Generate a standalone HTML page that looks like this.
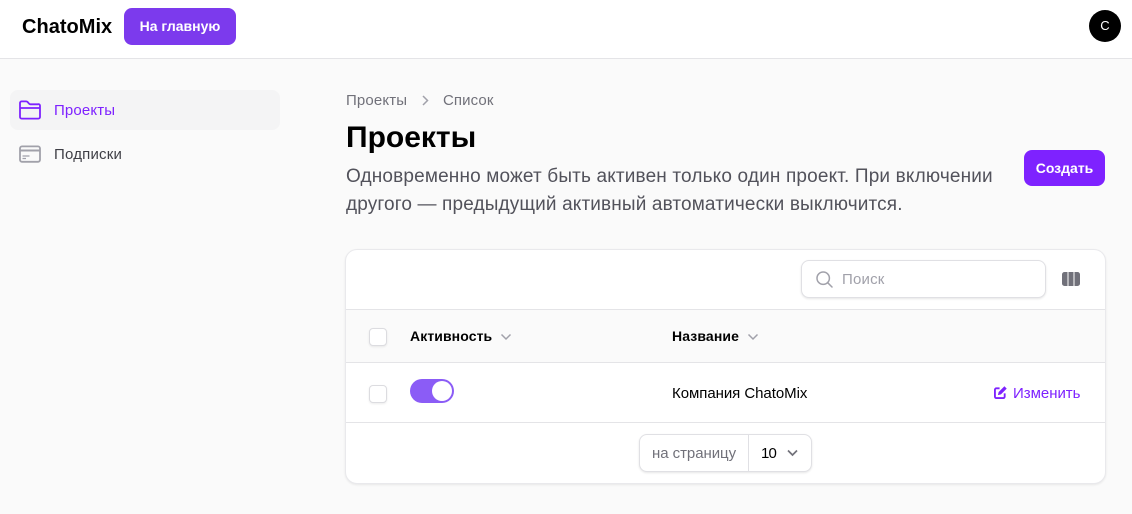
<!DOCTYPE html>
<html><head><meta charset="utf-8">
<style>
*{box-sizing:border-box}
html,body{margin:0;padding:0}
body{width:1132px;height:514px;overflow:hidden;background:#fafafa;position:relative;font-family:"Liberation Sans",sans-serif;color:#000}
.a{position:absolute;white-space:nowrap}
</style></head><body>
<div class="a" style="left:0;top:0;width:1132px;height:59px;background:#fff;border-bottom:1px solid #e4e4e7"></div>
<div class="a" style="left:22px;top:15px;font-size:20px;line-height:24px;font-weight:700;letter-spacing:.02px">ChatoMix</div>
<div class="a" style="left:124px;top:8px;width:112px;height:37px;background:#7c3aed;border-radius:8px;color:#fff;font-size:14px;font-weight:700;line-height:37px;text-align:center">На главную</div>
<div class="a" style="left:1089px;top:10px;width:32px;height:32px;border-radius:50%;background:#000;color:#fff;font-size:13px;line-height:32px;text-align:center">C</div>

<div class="a" style="left:10px;top:90px;width:270px;height:40px;background:#f4f4f5;border-radius:8px"></div>
<svg class="a" style="left:19px;top:100px" width="22" height="20" viewBox="0 0 22 20" fill="none" stroke="#7e22ff" stroke-width="1.800" stroke-linejoin="round"><path d="M1 5V3a1.600 1.600 0 0 1 1.600-1.600h4.600c.6 0 1 .2 1.400.6l1.600 1.800c.3.3.7.500 1.200.500h7.400A1.600 1.600 0 0 1 21 6v11a1.600 1.600 0 0 1-1.600 1.600H2.600A1.600 1.600 0 0 1 1 17V5Z"/><path d="M1 8h20"/></svg>
<div class="a" style="left:54px;top:102px;font-size:15px;line-height:18px;color:#7e22ff;letter-spacing:.15px">Проекты</div>
<svg class="a" style="left:19px;top:145px" width="22" height="18" viewBox="0 0 22 18" fill="none" stroke="#a1a1aa" stroke-width="1.800"><rect x="1" y="1.400" width="20" height="15.400" rx="2"/><path d="M1 5.500h20" stroke-width="2"/><path d="M3.500 11h7M3.500 13.500h3.500" stroke-width="1.200"/></svg>
<div class="a" style="left:54px;top:146px;font-size:15px;line-height:18px;color:#3f3f46;letter-spacing:.2px">Подписки</div>

<div class="a" style="left:346px;top:92px;font-size:15px;line-height:18px;color:#71717a;letter-spacing:.15px">Проекты</div>
<svg class="a" style="left:420px;top:94px" width="11" height="13" viewBox="0 0 11 13" fill="none" stroke="#a1a1aa" stroke-width="1.500"><path d="M3 2l4.500 4.500L3 11"/></svg>
<div class="a" style="left:443px;top:92px;font-size:15px;line-height:18px;color:#71717a;letter-spacing:.1px">Список</div>
<div class="a" style="left:346px;top:120px;font-size:30px;line-height:36px;font-weight:700;letter-spacing:0">Проекты</div>
<div class="a" style="left:346px;top:163px;font-size:19px;line-height:28px;color:#52525b;letter-spacing:.16px">Одновременно может быть активен только один проект. При включении</div>
<div class="a" style="left:346px;top:191px;font-size:19px;line-height:28px;color:#52525b;letter-spacing:.14px">другого — предыдущий активный автоматически выключится.</div>
<div class="a" style="left:1024px;top:150px;width:81px;height:36px;background:#7e22ff;border-radius:8px;color:#fff;font-size:14px;font-weight:700;line-height:36px;text-align:center">Создать</div>

<div class="a" style="left:345px;top:249px;width:761px;height:235px;background:#fff;border:1px solid #e9e9ec;border-radius:12px;box-shadow:0 1px 2px rgba(0,0,0,.08)"></div>
<div class="a" style="left:801px;top:260px;width:245px;height:38px;background:#fff;border:1px solid #e0e0e4;border-radius:8px;box-shadow:0 1px 2px rgba(0,0,0,.1)"></div>
<svg class="a" style="left:816px;top:271px" width="17" height="17" viewBox="0 0 17 17" fill="none" stroke="#a1a1aa" stroke-width="1.500" stroke-linecap="round"><circle cx="7.200" cy="7.200" r="6.200"/><path d="M11.800 11.800L16 16"/></svg>
<div class="a" style="left:842px;top:271px;font-size:15px;line-height:18px;color:#a1a1aa;letter-spacing:.2px">Поиск</div>
<svg class="a" style="left:1062px;top:272px" width="18" height="14" viewBox="0 0 18 14" fill="#71717a"><path d="M2.500 0h3v14h-3A2.500 2.500 0 0 1 0 11.500v-9A2.500 2.500 0 0 1 2.500 0ZM6.500 0h5v14h-5ZM12.500 0h3A2.500 2.500 0 0 1 18 2.500v9a2.500 2.500 0 0 1-2.500 2.500h-3Z"/></svg>

<div class="a" style="left:346px;top:309px;width:759px;height:54px;background:#fafafa;border-top:1px solid #e4e4e7;border-bottom:1px solid #e4e4e7"></div>
<div class="a" style="left:369px;top:328px;width:18px;height:18px;background:#fff;border:1px solid #dcdce0;border-radius:4px;box-shadow:0 1px 2px rgba(0,0,0,.08)"></div>
<div class="a" style="left:410px;top:327px;font-size:14px;line-height:18px;font-weight:700;letter-spacing:.1px">Активность</div>
<svg class="a" style="left:500px;top:332px" width="12" height="10" viewBox="0 0 12 10" fill="none" stroke="#a1a1aa" stroke-width="1.500"><path d="M1.500 2.500L6 7l4.500-4.500"/></svg>
<div class="a" style="left:672px;top:327px;font-size:14px;line-height:18px;font-weight:700;letter-spacing:.12px">Название</div>
<svg class="a" style="left:747px;top:332px" width="12" height="10" viewBox="0 0 12 10" fill="none" stroke="#a1a1aa" stroke-width="1.500"><path d="M1.500 2.500L6 7l4.500-4.500"/></svg>

<div class="a" style="left:369px;top:385px;width:18px;height:18px;background:#fff;border:1px solid #dcdce0;border-radius:4px;box-shadow:0 1px 2px rgba(0,0,0,.08)"></div>
<div class="a" style="left:410px;top:379px;width:44px;height:24px;background:#8b5cf6;border-radius:12px"></div>
<div class="a" style="left:432px;top:381px;width:20px;height:20px;background:#fff;border-radius:50%"></div>
<div class="a" style="left:672px;top:385px;font-size:15px;line-height:18px;letter-spacing:-.05px">Компания ChatoMix</div>
<svg class="a" style="left:994px;top:386px" width="13" height="13" viewBox="0 0 14 14" fill="none"><path d="M6 2.500H2.500A1.500 1.500 0 0 0 1 4v7.500A1.500 1.500 0 0 0 2.500 13H10a1.500 1.500 0 0 0 1.500-1.500V8" stroke="#7e22ff" stroke-width="2"/><path d="M11.200.300l2.500 2.500L7.500 9l-3.300.800.800-3.300Z" fill="#7e22ff"/></svg>
<div class="a" style="left:1013px;top:385px;font-size:15px;line-height:18px;color:#7e22ff;letter-spacing:-.03px">Изменить</div>

<div class="a" style="left:346px;top:422px;width:759px;height:1px;background:#e4e4e7"></div>
<div class="a" style="left:639px;top:434px;width:173px;height:38px;background:#fff;border:1px solid #e0e0e4;border-radius:8px;box-shadow:0 1px 2px rgba(0,0,0,.1)"></div>
<div class="a" style="left:748px;top:435px;width:1px;height:36px;background:#e0e0e4"></div>
<div class="a" style="left:652px;top:445px;font-size:15px;line-height:18px;color:#71717a;letter-spacing:-.05px">на страницу</div>
<div class="a" style="left:761px;top:445px;font-size:15px;line-height:18px;letter-spacing:-.8px">10</div>
<svg class="a" style="left:786px;top:448px" width="13" height="10" viewBox="0 0 13 10" fill="none" stroke="#71717a" stroke-width="1.700"><path d="M2 2.500L6.500 7 11 2.500"/></svg>
</body></html>
